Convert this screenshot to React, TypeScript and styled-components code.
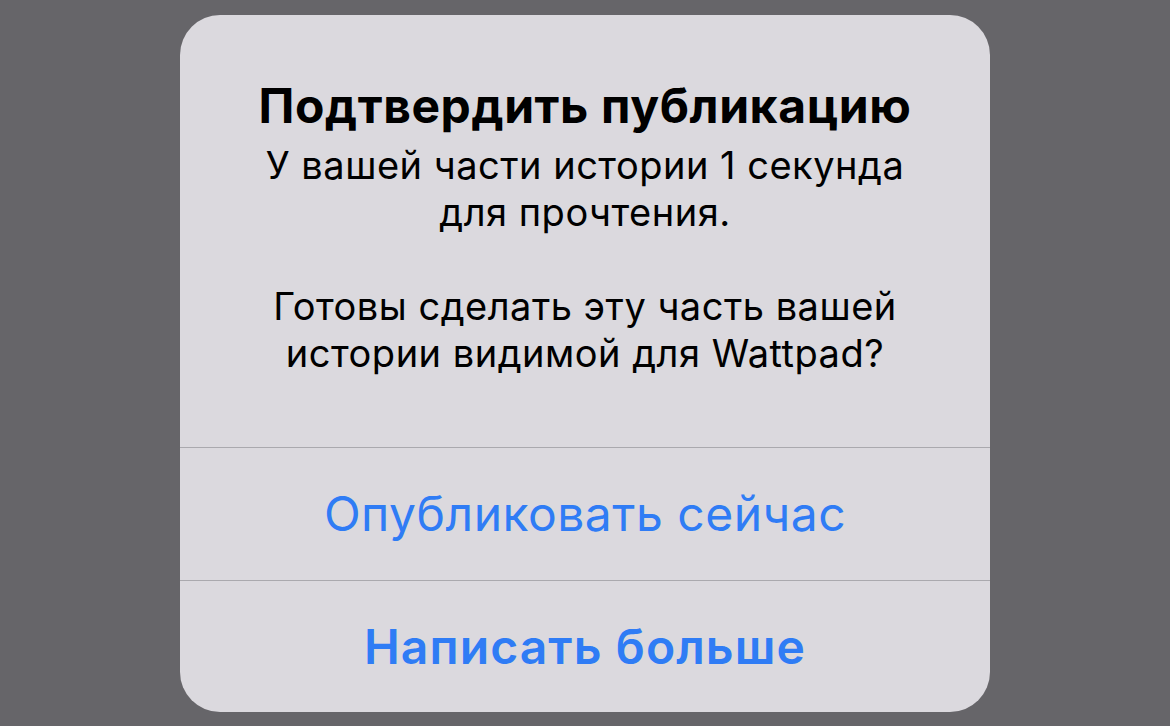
import React from 'react'
import styled, { createGlobalStyle } from 'styled-components'

const GlobalStyle = createGlobalStyle`
  html, body {
    margin: 0;
    padding: 0;
    background: #666569;
  }
  body {
    font-family: Inter, "Noto Sans", "Liberation Sans", sans-serif;
    -webkit-font-smoothing: antialiased;
  }
`

const Page = styled.div`
  display: flex;
  justify-content: center;
  align-items: flex-start;
  height: 726px;
  padding-top: 15px;
  box-sizing: border-box;
  overflow: hidden;
`

const AlertBox = styled.div`
  width: 810px;
  height: 697px;
  background: #dbd9de;
  border-radius: 40px;
  display: flex;
  flex-direction: column;
  overflow: hidden;
`

const Content = styled.div`
  height: 432px;
  box-sizing: border-box;
  padding: 63px 30px 0;
  display: flex;
  flex-direction: column;
  align-items: center;
  text-align: center;
  color: #000;
`

const Title = styled.h2`
  margin: 0;
  font-size: 48px;
  line-height: 56px;
  font-weight: 700;
  letter-spacing: 0.6px;
`

const Message = styled.p`
  margin: 8px 0 0;
  font-size: 38px;
  line-height: 47px;
  font-weight: 400;
  white-space: pre-line;
  letter-spacing: 0.5px;
`

const ActionButton = styled.button<{ primary?: boolean }>`
  flex: 1;
  border: none;
  border-top: 1.5px solid #aaa9ae;
  background: transparent;
  color: #2f7cf5;
  font-family: inherit;
  font-size: 48px;
  font-weight: ${({ primary }) => (primary ? 600 : 400)};
  letter-spacing: ${({ primary }) => (primary ? '1.1px' : '0.5px')};
  cursor: pointer;
  padding: 0;
  display: flex;
  align-items: center;
  justify-content: center;
`

export default function App() {
  return (
    <>
      <GlobalStyle />
      <Page>
        <AlertBox>
          <Content>
            <Title>Подтвердить публикацию</Title>
            <Message>
              {'У вашей части истории 1 секунда\nдля прочтения.\n\nГотовы сделать эту часть вашей\nистории видимой для Wattpad?'}
            </Message>
          </Content>
          <ActionButton>Опубликовать сейчас</ActionButton>
          <ActionButton primary>Написать больше</ActionButton>
        </AlertBox>
      </Page>
    </>
  )
}
